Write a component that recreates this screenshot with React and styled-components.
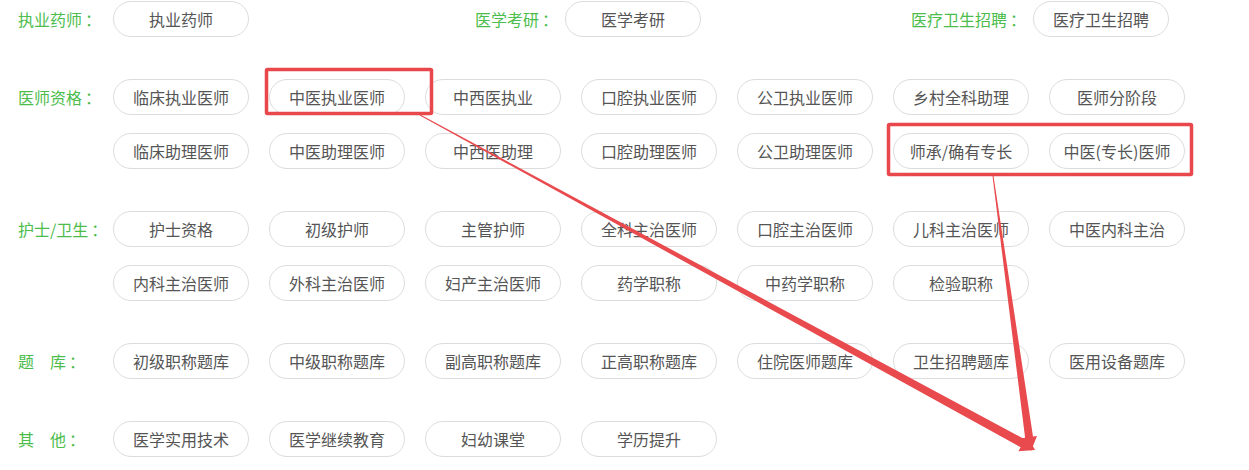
import React from 'react'
import styled, { createGlobalStyle } from 'styled-components'

const GlobalStyle = createGlobalStyle`
    body {
        margin: 0;
        background: #fff;
        font-family: "Noto Sans CJK SC", "Microsoft YaHei", sans-serif;
    }
`

const groups = [
    { label: '医师资格', items: ['临床执业医师', '中医执业医师', '中西医执业', '口腔执业医师', '公卫执业医师', '乡村全科助理', '医师分阶段', '临床助理医师', '中医助理医师', '中西医助理', '口腔助理医师', '公卫助理医师', '师承/确有专长', '中医(专长)医师'] },
    { label: '护士/卫生', items: ['护士资格', '初级护师', '主管护师', '全科主治医师', '口腔主治医师', '儿科主治医师', '中医内科主治', '内科主治医师', '外科主治医师', '妇产主治医师', '药学职称', '中药学职称', '检验职称'] },
    { label: '题\u3000库', items: ['初级职称题库', '中级职称题库', '副高职称题库', '正高职称题库', '住院医师题库', '卫生招聘题库', '医用设备题库'] },
    { label: '其\u3000他', items: ['医学实用技术', '医学继续教育', '妇幼课堂', '学历提升'] },
]

const topItems = [
    { label: '执业药师', item: '执业药师', offset: 0, first: true },
    { label: '医学考研', item: '医学考研', offset: 226 },
    { label: '医疗卫生招聘', item: '医疗卫生招聘', offset: 210 },
]

// tapered arrow: thin at the start, wider toward the head
const arrowPoints = (x0, y0, x1, y1, w0, w1, headLen, headW) => {
    const dx = x1 - x0
    const dy = y1 - y0
    const len = Math.sqrt(dx * dx + dy * dy)
    const ux = dx / len
    const uy = dy / len
    const px = -uy
    const py = ux
    const bx = x1 - ux * headLen
    const by = y1 - uy * headLen
    const pts = [
        [x0 + px * w0 / 2, y0 + py * w0 / 2],
        [bx + px * w1 / 2, by + py * w1 / 2],
        [bx + px * headW / 2, by + py * headW / 2],
        [x1, y1],
        [bx - px * headW / 2, by - py * headW / 2],
        [bx - px * w1 / 2, by - py * w1 / 2],
        [x0 - px * w0 / 2, y0 - py * w0 / 2],
    ]
    return pts.map(p => p[0].toFixed(1) + ',' + p[1].toFixed(1)).join(' ')
}

const App = () => {
    return (
        <>
            <GlobalStyle />
            <Page>
                <TopRow>
                    {topItems.map(t => (
                        <TopItem key={t.item} $offset={t.offset}>
                            <Label $fixed={t.first}>{t.label}<Colon>：</Colon></Label>
                            <Pill>{t.item}</Pill>
                        </TopItem>
                    ))}
                </TopRow>

                {groups.map(g => (
                    <Group key={g.label}>
                        <Label $fixed>{g.label}<Colon>：</Colon></Label>
                        <PillGrid>
                            {g.items.map(i => <Pill key={i}>{i}</Pill>)}
                        </PillGrid>
                    </Group>
                ))}

                <Marks width="1249" height="470" viewBox="0 0 1249 470">
                    <rect x="266.5" y="69.5" width="165" height="44" fill="none" stroke="#e8484c" strokeWidth="3.5" rx="1" />
                    <rect x="888.5" y="124.5" width="303" height="50" fill="none" stroke="#e8484c" strokeWidth="3.5" rx="1" />
                    <polygon points={arrowPoints(420, 115, 1035, 450, 1, 9, 14, 18)} fill="#e84a4e" />
                    <polygon points={arrowPoints(993, 176, 1031, 451, 1, 8, 14, 16)} fill="#e84a4e" />
                </Marks>
            </Page>
        </>
    )
}

const Page = styled.div`
    position: relative;
    width: 1249px;
    height: 470px;
    padding: 1px 0 0 18px;
    box-sizing: border-box;
    overflow: hidden;
`

const TopRow = styled.div`
    display: flex;
    align-items: center;
`

const TopItem = styled.div`
    display: flex;
    align-items: center;
    margin-left: ${p => p.$offset}px;
`

const Label = styled.div`
    width: ${p => (p.$fixed ? '95px' : 'auto')};
    margin-right: ${p => (p.$fixed ? '0' : '7px')};
    flex-shrink: 0;
    height: 36px;
    line-height: 36px;
    font-size: 16px;
    color: #4cbd4c;
    white-space: nowrap;
`

const Colon = styled.span`
    display: inline-block;
    padding-left: 3px;
`

const Group = styled.div`
    display: flex;
    align-items: flex-start;
    margin-top: 42px;
`

const PillGrid = styled.div`
    display: grid;
    grid-template-columns: repeat(7, 136px);
    column-gap: 20px;
    row-gap: 18px;
`

const Pill = styled.div`
    box-sizing: border-box;
    width: 136px;
    height: 36px;
    border: 1px solid #dcdcdc;
    border-radius: 18px;
    background: #fff;
    display: flex;
    align-items: center;
    justify-content: center;
    font-size: 16px;
    color: #555;
    white-space: nowrap;
`

const Marks = styled.svg`
    position: absolute;
    left: 0;
    top: 0;
    pointer-events: none;
`

export default App
